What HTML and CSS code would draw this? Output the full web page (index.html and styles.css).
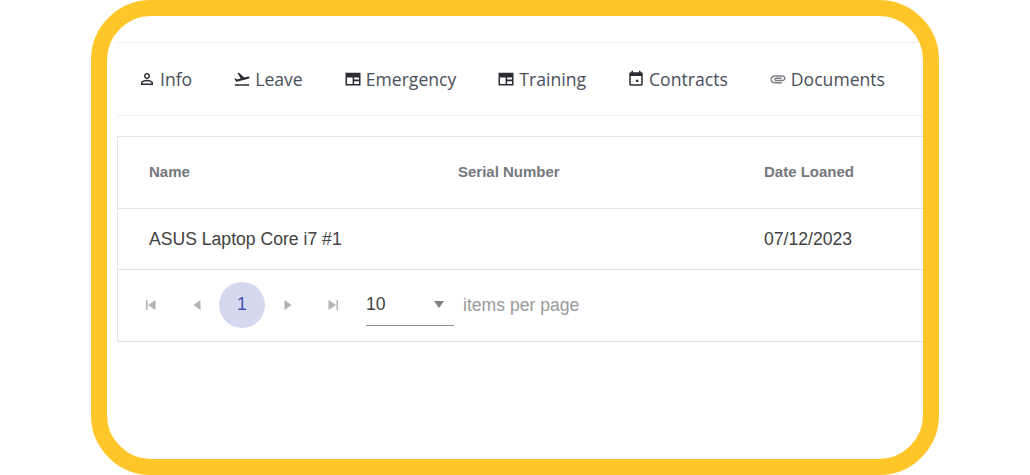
FILE: index.html
```html
<!DOCTYPE html>
<html lang="en">
<head>
    <title>Employee assets</title>
    <link rel="stylesheet" href="styles.css">
</head>

<body>
<div class="frame">
    <div class="tabs">
        <div class="tab">
            <svg viewBox="0 0 24 24"><path d="M12 5.900c1.160 0 2.100.94 2.100 2.100s-.94 2.100-2.100 2.100S9.900 9.160 9.900 8s.94-2.100 2.100-2.100m0 9c2.970 0 6.100 1.460 6.100 2.100v1.100H5.900V17c0-.64 3.130-2.100 6.100-2.100M12 4C9.790 4 8 5.790 8 8s1.790 4 4 4 4-1.790 4-4-1.790-4-4-4zm0 9c-2.670 0-8 1.340-8 4v3h16v-3c0-2.660-5.330-4-8-4z"/></svg>
            <span>Info</span>
        </div>
        <div class="tab">
            <svg viewBox="0 0 24 24"><path d="M2.500 19h19v2h-19zm19.570-9.360c-.21-.8-1.040-1.280-1.840-1.060L14.920 10l-6.900-6.430-1.930.51 4.140 7.170-4.970 1.330-1.970-1.540-1.450.39 1.820 3.160.77 1.330 1.600-.43 5.310-1.420 4.350-1.160L21 11.490c.81-.23 1.280-1.050 1.070-1.850z"/></svg>
            <span>Leave</span>
        </div>
        <div class="tab">
            <svg viewBox="0 0 24 24"><path d="M2 3.500h20v17H2v-17zm2 6.500v8.500h7.500V10H4zm9.500 0v2.500H20V10h-6.500zm0 5v3.500H20V15h-6.500z" fill-rule="evenodd"/></svg>
            <span>Emergency</span>
        </div>
        <div class="tab">
            <svg viewBox="0 0 24 24"><path d="M2 3.500h20v17H2v-17zm2 6.500v8.500h7.500V10H4zm9.500 0v2.500H20V10h-6.500zm0 5v3.500H20V15h-6.500z" fill-rule="evenodd"/></svg>
            <span>Training</span>
        </div>
        <div class="tab">
            <svg viewBox="0 0 24 24"><path d="M15 13h-3v3h3v-3zM16 1v2H8V1H6v2H5c-1.110 0-1.990.9-1.990 2L3 19c0 1.100.89 2 2 2h14c1.100 0 2-.9 2-2V5c0-1.100-.9-2-2-2h-1V1h-2zm3 18H5V8h14v11z"/></svg>
            <span>Contracts</span>
        </div>
        <div class="tab">
            <svg class="clip" viewBox="0 0 24 24"><path d="M2 12.500C2 9.460 4.460 7 7.500 7H18c2.210 0 4 1.790 4 4s-1.790 4-4 4H9.500C8.120 15 7 13.880 7 12.500S8.120 10 9.500 10H17v2H9.410c-.55 0-.55 1 0 1H18c1.100 0 2-.9 2-2s-.9-2-2-2H7.500C5.570 9 4 10.570 4 12.500S5.570 16 7.500 16H17v2H7.500C4.460 18 2 15.540 2 12.500z"/></svg>
            <span>Documents</span>
        </div>
    </div>

    <div class="grid">
        <div class="grid-row grid-head">
            <div>Name</div>
            <div>Serial Number</div>
            <div>Date Loaned</div>
        </div>
        <div class="grid-row grid-body">
            <div>ASUS Laptop Core i7 #1</div>
            <div></div>
            <div>07/12/2023</div>
        </div>
        <div class="pager">
            <div class="page-btn">
                <svg viewBox="0 0 14 14"><path d="M3 2h1.500v10H3zM12.500 2v10L5 7z"/></svg>
            </div>
            <div class="page-btn">
                <svg viewBox="0 0 14 14"><path d="M11.500 2v10L4.500 7z"/></svg>
            </div>
            <div class="page-btn current"><span>1</span></div>
            <div class="page-btn">
                <svg viewBox="0 0 14 14"><path d="M3.500 2v10l7-5z"/></svg>
            </div>
            <div class="page-btn">
                <svg viewBox="0 0 14 14"><path d="M1.500 2v10L9 7zM9.500 2H11v10H9.500z"/></svg>
            </div>
            <div class="page-size">
                <span>10</span>
                <i class="caret"></i>
            </div>
            <div class="page-label">items per page</div>
        </div>
    </div>
</div>
</body>
</html>
```

FILE: styles.css
```css
body {
    margin: 0;
    background-color: #fff;
    font-family: "Liberation Sans", Arial, sans-serif;
}

.frame {
    box-sizing: border-box;
    width: 848px;
    height: 475px;
    margin-left: 91px;
    padding: 26px 0 0 10px;
    border: 16px solid #ffc629;
    border-radius: 60px;
    overflow: hidden;
}

.tabs {
    display: flex;
    align-items: center;
    gap: 41px;
    height: 72px;
    padding-left: 21px;
    border-top: 1px solid #eef0f5;
    border-bottom: 1px solid #eef0f5;
    font-family: "Open Sans", sans-serif;
    font-size: 17.6px;
    color: #4a4f5c;
}

.tab {
    display: flex;
    align-items: center;
    gap: 4px;
}

.tab svg {
    width: 18px;
    height: 18px;
    fill: #2b2d33;
}

.tab svg.clip {
    fill: #7d7f85;
}

.grid {
    margin-top: 20px;
    border: 1px solid #e4e4e4;
    border-right: none;
}

.grid-row {
    display: grid;
    grid-template-columns: 309px 306px 1fr;
    align-items: center;
    padding-left: 31px;
    border-bottom: 1px solid #e4e4e4;
}

.grid-head {
    box-sizing: border-box;
    height: 72px;
    padding-bottom: 2px;
    font-size: 15px;
    font-weight: bold;
    color: #75787d;
}

.grid-body {
    height: 60px;
    font-size: 17.6px;
    color: #424242;
}

.pager {
    display: flex;
    align-items: center;
    box-sizing: border-box;
    height: 71px;
    padding: 0 0 2px 9px;
    font-size: 17.6px;
}

.page-btn {
    display: flex;
    align-items: center;
    justify-content: center;
    width: 46px;
    height: 46px;
    flex: none;
}

.page-btn svg {
    width: 14px;
    height: 14px;
    fill: #b3b3b3;
}

.page-btn.current {
    border-radius: 50%;
    background-color: #d5d9ef;
    color: #3f51b5;
}

.page-size {
    display: flex;
    align-items: center;
    justify-content: space-between;
    box-sizing: border-box;
    width: 88px;
    height: 42px;
    margin: 0 9px;
    padding-right: 10px;
    border-bottom: 1px solid #8f8f8f;
    color: #424242;
}

.caret {
    width: 0;
    height: 0;
    border-left: 5px solid transparent;
    border-right: 5px solid transparent;
    border-top: 7px solid #808080;
}

.page-label {
    padding-top: 2px;
    color: #9a9a9a;
}
```
